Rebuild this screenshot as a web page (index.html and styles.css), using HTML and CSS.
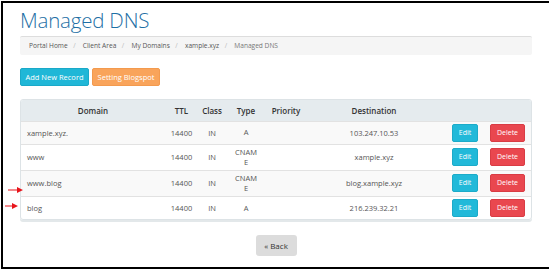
FILE: index.html
```html
<!DOCTYPE html>
<html lang="en">
<head>
  <meta charset="UTF-8">
  <title>Managed DNS</title>
  <link rel="stylesheet" href="styles.css">
</head>
<body>
  <div class="frame">
    <h1>Managed DNS</h1>
    <div class="crumbs">
      <span>Portal Home</span><i>/</i>
      <span>Client Area</span><i>/</i>
      <span>My Domains</span><i>/</i>
      <span>xample.xyz</span><i>/</i>
      <span class="here">Managed DNS</span>
    </div>
    <div class="actions">
      <button class="btn info">Add New Record</button>
      <button class="btn warn">Setting Blogspot</button>
    </div>
    <div class="table-box">
      <table>
        <colgroup>
          <col style="width:144px"><col style="width:33px"><col style="width:28px"><col style="width:40px">
          <col style="width:40px"><col style="width:136px"><col style="width:46px"><col style="width:45px">
        </colgroup>
        <thead>
          <tr>
            <th>Domain</th><th>TTL</th><th>Class</th><th>Type</th><th>Priority</th><th>Destination</th><th></th><th></th>
          </tr>
        </thead>
        <tbody>
          <tr>
            <td class="name">xample.xyz.</td><td>14400</td><td>IN</td><td class="type">A</td><td></td><td>103.247.10.53</td>
            <td><span class="sm edit">Edit</span></td><td class="del"><span class="sm delete">Delete</span></td>
          </tr>
          <tr>
            <td class="name">www</td><td>14400</td><td>IN</td><td class="type">CNAME</td><td></td><td>xample.xyz</td>
            <td><span class="sm edit">Edit</span></td><td class="del"><span class="sm delete">Delete</span></td>
          </tr>
          <tr>
            <td class="name">www.blog</td><td>14400</td><td>IN</td><td class="type">CNAME</td><td></td><td>blog.xample.xyz</td>
            <td><span class="sm edit">Edit</span></td><td class="del"><span class="sm delete">Delete</span></td>
          </tr>
          <tr>
            <td class="name">blog</td><td>14400</td><td>IN</td><td class="type">A</td><td></td><td>216.239.32.21</td>
            <td><span class="sm edit">Edit</span></td><td class="del"><span class="sm delete">Delete</span></td>
          </tr>
        </tbody>
      </table>
    </div>
    <div class="back-row">
      <button class="btn back">&laquo; Back</button>
    </div>

    <svg class="arrow a1" width="15" height="6" viewBox="0 0 15 6"><path d="M0 2.4h10v1.2H0z M9 0l6 3-6 3z" fill="#e8141b"/></svg>
    <svg class="arrow a2" width="13" height="6" viewBox="0 0 13 6"><path d="M0 2.4h8v1.2H0z M7 0l6 3-6 3z" fill="#e8141b"/></svg>
  </div>
</body>
</html>
```

FILE: styles.css
```css
* {
  box-sizing: border-box;
}
html, body {
  margin: 0;
  padding: 0;
  background: #fff;
  font-family: 'Open Sans', 'Noto Sans', sans-serif;
  color: #555;
}
.frame {
  position: relative;
  margin: 1px 0 0 1px;
  height: 268px;
  border-top: 2px solid #000;
  border-left: 2px solid #000;
  border-bottom: 2px solid #000;
  padding: 0 17px 0 17px;
}
h1 {
  margin: 2px 0 1px;
  font-size: 20.5px;
  line-height: 30px;
  font-weight: 300;
  letter-spacing: -0.2px;
  color: #1e6fa5;
}
.crumbs {
  height: 19px;
  background: #f5f5f5;
  border-top: 1px solid #ddd;
  border-radius: 2px;
  padding-left: 9px;
  font-size: 6.6px;
  line-height: 18px;
  color: #555;
}
.crumbs i {
  font-style: normal;
  color: #bbb;
  margin: 0 5.5px;
}
.crumbs .here { color: #777; }
.actions {
  display: flex;
  gap: 3px;
  margin-top: 13px;
}
.btn {
  font-family: inherit;
  border: none;
  border-radius: 2px;
  height: 18px;
  padding: 0;
  font-size: 7.5px;
  color: #fff;
}
.btn.info { width: 69px; background: #20b7d7; border: 1px solid #1aa9c8; }
.btn.warn { width: 68px; background: #f9a45b; border: 1px solid #f39a4e; }
.table-box {
  margin-top: 13px;
  border: 1px solid #dde3e6;
  border-radius: 3px;
  overflow: hidden;
  box-shadow: 0 2px 0 #e3e8ea;
}
table {
  width: 100%;
  table-layout: fixed;
  border-collapse: collapse;
  font-size: 7.5px;
}
th {
  height: 21px;
  background: #e5ebee;
  color: #333;
  font-weight: 600;
  font-size: 8px;
  text-align: center;
  padding: 0;
}
td {
  text-align: center;
  padding: 2px 0;
  border-top: 1px solid #e2e2e2;
  height: 23px;
  color: #555;
}
tbody tr:nth-child(odd) td { background: #f9f9f9; }
td.name { text-align: left; padding-left: 6px; }
td.type {
  padding: 2px 7px;
  word-break: break-all;
  line-height: 10.5px;
}
td.del { padding: 2px 8px 2px 2px; }
.sm {
  display: inline-block;
  height: 18px;
  line-height: 16px;
  border-radius: 2px;
  color: #fff;
  font-size: 7px;
  vertical-align: middle;
}
.sm.edit { width: 26px; background: #22b9d9; border: 1px solid #1cabc9; }
.sm.delete { width: 35px; background: #e9474f; border: 1px solid #d93c44; }
.back-row {
  display: flex;
  justify-content: center;
  margin-top: 15px;
}
.btn.back {
  width: 41px;
  height: 21px;
  background: #dcdcdc;
  color: #333;
  font-size: 8px;
  border-radius: 3px;
}
.arrow { position: absolute; }
.arrow.a1 { left: 5px; top: 184px; }
.arrow.a2 { left: 2px; top: 200px; }
```
